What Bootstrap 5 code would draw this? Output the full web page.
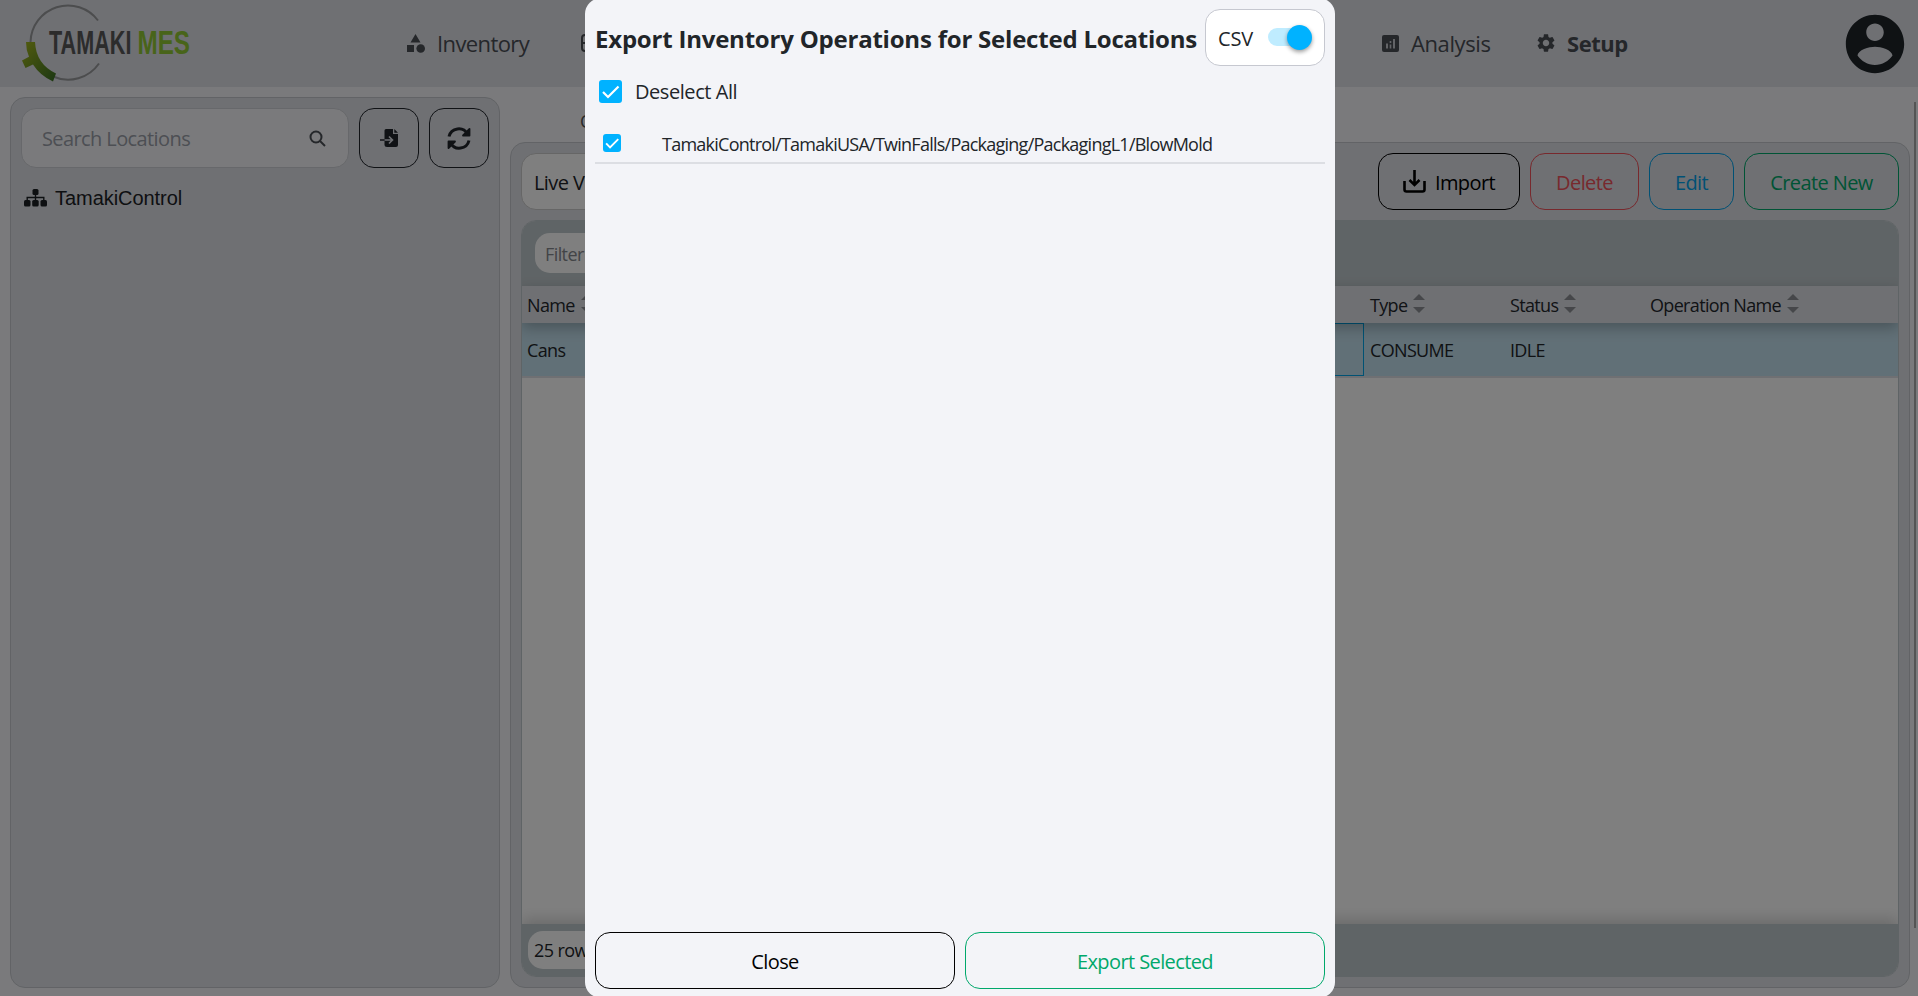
<!DOCTYPE html>
<html lang="en">
<head>
<meta charset="utf-8">
<title>Tamaki MES - Setup</title>
<link href="https://cdn.jsdelivr.net/npm/bootstrap@5.3.0/dist/css/bootstrap.min.css" rel="stylesheet">
<style>
html,body{height:100%;overflow:hidden}
body{background:#f4f5f8;font-family:"Open Sans","Noto Sans",sans-serif;font-size:20px;line-height:1.3;color:#212529;letter-spacing:-.03em}
svg{display:block;flex:none}
.topbar{height:87px;background:#dee0e7;color:#4a4e55}
.brand-col{width:407px}
.nav-entry{font-size:22px;gap:12px;padding-bottom:1px}
.w-inv{width:173px}.w-mid{width:802px}.w-ana{width:155px}
.w-ana span{letter-spacing:-.018em}
.w-set{letter-spacing:-.02em}
.body-area{height:909px;padding:10px 8px 8px 10px;gap:10px}
.pane{background:#dee0e7;border:1px solid #c4c7cc;border-radius:15px;padding:10px}
.side{width:490px}
.search-box{height:60px;width:328px;background:#f4f5f8;border:1px solid #cfd1d6;border-radius:15px;color:#9a9ea8;padding:1px 22px 0 20px}
.btn-o{background:transparent;border:1px solid currentColor;border-radius:15px;height:57px;display:flex;align-items:center;justify-content:center;font-size:20px;padding:3px 0 0;letter-spacing:-.03em}
.sq{width:60px;height:60px;color:#21252b;padding:0}
.tree-row{font-family:"Liberation Sans",Arial,sans-serif;font-size:20px;letter-spacing:-.05px;color:#1c2025;margin-top:18px;gap:8px;padding-left:3px;line-height:24px}
.tabs-line{height:45px;padding:13px 0 0 70px;font-size:18px;color:#555}
.live{background:#fff;border:1px solid #ccc;border-radius:15px;width:200px;height:57px;padding:2px 0 0 12px}
.grid-wrap{background:#fff;border-radius:15px;overflow:hidden;border:1px solid #bfc8cc;font-size:18px}
.grid-tools{background:#bfc8cc;height:65px;padding:12px 13px 13px}
.pill{background:#fff;border-radius:15px}
.g-row{display:grid;grid-template-columns:702px 140px 140px 140px 1fr;letter-spacing:-.037em}
.g-head{height:37px;background:#dee0e7;color:#23272c;box-shadow:0 5px 14px rgba(0,0,0,.25);position:relative}
.g-row>div{padding:2px 0 0 6px;display:flex;align-items:center;gap:6px}
.g-row>div:first-child{padding-left:5px}
.g-data{background:#c3e0ee;height:55px;border-bottom:2px solid #dee0e7}
.g-data .sel{border:1px solid #00a5e8}
.g-foot{height:52px;background:#bfc8cc;box-shadow:0 -4px 14px rgba(0,0,0,.18);padding:7px 6px}
.sort{display:flex;flex-direction:column;gap:7px;margin-top:-4px}
.sort:before{content:"";border:6px solid transparent;border-top:0;border-bottom:6px solid #8c8f94}
.sort:after{content:"";border:6px solid transparent;border-bottom:0;border-top:6px solid #8c8f94}
.track{width:2px;height:826px;background:#aaa;right:2px;top:102px}
.shade{background:rgba(0,0,0,.5)}
.sheet{width:750px;height:1000px;margin:-2px 0 0 585px;background:#f3f4f8;border-radius:16px;padding:11px 10px 9px}
.sheet-title{font-size:24px;font-weight:700;letter-spacing:-.009em;width:610px;padding-top:2px}
.csv{width:120px;height:57px;background:#fff;border:1px solid #c6c8d0;border-radius:15px;padding:0 12px}
.csv span{letter-spacing:-.005em;padding-top:2px}
.sw{width:44px;height:26px}
.sw-track{width:40px;height:18px;border-radius:9px;background:#bfecff;margin-top:-1px}
.knob{width:25px;height:25px;border-radius:50%;background:#00b2ff;right:0;top:0;box-shadow:0 2px 4px rgba(0,0,0,.4)}
.cb{background:#00b2ff;border-radius:3px}
.path-row{height:40px;border-bottom:2px solid #dcdee3;font-size:18px;letter-spacing:-.042em;margin-top:18px;padding:0 0 0 8px}
.c-red{color:#f0525a}.c-blue{color:#00a2ea}.c-green{color:#00a86b}
</style>
</head>
<body>
<header class="topbar d-flex align-items-center">
  <div class="brand-col">
    <svg width="200" height="87" viewBox="0 0 200 87">
      <defs><linearGradient id="gr" x1="0" y1="0" x2="1" y2="1"><stop offset="0" stop-color="#a6b81e"/><stop offset="1" stop-color="#387026"/></linearGradient></defs>
      <path d="M30.500 42A37.5 37.5 0 0 1 98 20.500M53 76.500A37.500 37.500 0 0 0 99 63.500" fill="none" stroke="#999a9c" stroke-width="2"/>
      <path d="M26 42H35Q36 64 56 73.500L53 81.500Q40 75.500 33 64.500L25.500 68 22 60.500 29 56.800Q26 50 26 42Z" fill="url(#gr)"/>
      <g font-family="Liberation Sans" font-weight="700" font-size="33" letter-spacing="0">
        <text transform="translate(49 54) scale(.655 1)" fill="#585858">TAMAKI</text>
        <text transform="translate(137.500 54) scale(.735 1)" fill="#91c934">MES</text>
      </g>
    </svg>
  </div>
  <div class="nav-entry w-inv d-flex align-items-center">
    <svg width="18" height="19" viewBox="0 0 18 19" fill="currentColor"><path d="M8.500 0 13.500 8.500H3.500ZM0 11H7V18H0Z"/><circle cx="13.700" cy="14.500" r="4.300"/></svg><span>Inventory</span>
  </div>
  <div class="nav-entry w-mid d-flex align-items-center">
    <svg width="18" height="18" viewBox="0 0 18 18" fill="none" stroke="currentColor" stroke-width="2"><rect x="2" y="1" width="15" height="16" rx="3"/><path d="M2 9H17"/></svg>
  </div>
  <div class="nav-entry w-ana d-flex align-items-center">
    <svg width="17" height="17" viewBox="0 0 17 17"><rect width="17" height="17" rx="2" fill="currentColor"/><path d="M4 8.500H6V13.500H4ZM7.700 6H9.300V8H7.700ZM7.700 9.500H9.300V13.500H7.700ZM11 4H13V13.500H11Z" fill="#c6c8cf"/></svg><span>Analysis</span>
  </div>
  <div class="nav-entry w-set d-flex align-items-center fw-bold">
    <svg width="18" height="18" viewBox="2 2 20 20" fill="currentColor"><path d="M19.140 12.940c.04-.3.060-.61.060-.94 0-.32-.02-.64-.07-.94l2.030-1.580c.18-.14.230-.41.120-.61l-1.920-3.320c-.12-.22-.37-.29-.59-.22l-2.390.96c-.5-.38-1.030-.7-1.620-.94l-.36-2.540c-.04-.24-.24-.41-.48-.41h-3.840c-.24 0-.43.170-.47.410l-.36 2.540c-.59.240-1.130.570-1.620.94l-2.390-.96c-.22-.08-.47 0-.59.220L2.740 8.870c-.12.210-.08.470.12.610l2.030 1.580c-.05.300-.09.630-.09.94s.02.640.070.940l-2.030 1.580c-.18.140-.23.410-.12.610l1.920 3.320c.12.220.37.290.59.220l2.390-.96c.5.380 1.030.700 1.620.940l.36 2.540c.05.240.24.410.480.410h3.840c.24 0 .44-.17.470-.41l.36-2.540c.59-.24 1.130-.56 1.620-.94l2.390.96c.22.080.470 0 .59-.22l1.920-3.320c.12-.22.070-.47-.12-.61l-2.010-1.580zM12 15.600c-1.980 0-3.600-1.620-3.600-3.600s1.620-3.600 3.600-3.600 3.600 1.620 3.600 3.600-1.620 3.600-3.600 3.600z"/></svg><span>Setup</span>
  </div>
  <svg class="ms-auto me-2" width="70" height="70" viewBox="0 0 24 24" fill="#1e2429"><path d="M12 2C6.480 2 2 6.480 2 12s4.480 10 10 10 10-4.480 10-10S17.520 2 12 2zm0 3c1.660 0 3 1.340 3 3s-1.340 3-3 3-3-1.340-3-3 1.340-3 3-3zm0 14.200c-2.500 0-4.710-1.280-6-3.220.03-1.990 4-3.080 6-3.080 1.990 0 5.970 1.090 6 3.080-1.290 1.940-3.500 3.220-6 3.220z"/></svg>
</header>

<main class="body-area d-flex">
  <aside class="pane side">
    <div class="d-flex justify-content-between">
      <div class="search-box d-flex align-items-center justify-content-between"><span>Search Locations</span>
        <svg width="17" height="17" viewBox="0 0 17 17" fill="none" stroke="#4a4e55" stroke-width="2"><circle cx="7" cy="7" r="5.500"/><path d="M11 11 16 16"/></svg></div>
      <button class="btn-o sq"><svg width="20" height="20" viewBox="0 0 20 20"><path d="M7 1H14V6H19V17Q19 19 17 19H8Q5.500 19 5.500 17V2.500Q5.500 1 7 1ZM15.300 1 19 4.800H15.300Z" fill="currentColor"/><path d="M5.500 12H13.500M10 8.500 13.500 12 10 15.500" fill="none" stroke="#dee0e7" stroke-width="1.600"/><path d="M1 12H5.500" stroke="currentColor" stroke-width="1.500"/></svg></button>
      <button class="btn-o sq"><svg width="24" height="23" viewBox="0 0 24 23" fill="none" stroke="currentColor" stroke-width="3" stroke-linejoin="round"><path d="M2 9.500A10 10 0 0 1 20.500 7M22 13.500A10 10 0 0 1 3.500 16" /><path d="M22.500 2V8.500H16ZM1.500 21V14.500H8Z" fill="currentColor" stroke-width="1.800"/></svg></button>
    </div>
    <div class="tree-row d-flex align-items-center">
      <svg width="23" height="18" viewBox="0 0 23 18"><g fill="currentColor"><rect x="8.500" y="0" width="6" height="6" rx="1.500"/><rect x="0" y="11" width="6.500" height="6.500" rx="1.500"/><rect x="8.200" y="11" width="6.500" height="6.500" rx="1.500"/><rect x="16.500" y="11" width="6.500" height="6.500" rx="1.500"/></g><path d="M11.500 5V12M3.200 12V8.500H19.800V12" fill="none" stroke="currentColor" stroke-width="1.400"/></svg>
      <span>TamakiControl</span>
    </div>
  </aside>
  <section class="flex-fill d-flex flex-column">
    <div class="tabs-line">O</div>
    <div class="pane flex-fill d-flex flex-column" style="gap:10px">
      <div class="d-flex" style="gap:10px">
        <div class="live d-flex align-items-center me-auto">Live View</div>
        <button class="btn-o" style="width:142px;color:#000;gap:9px"><svg width="23" height="23" viewBox="0 0 23 23" fill="none" stroke="currentColor" stroke-width="2.600" class="mb-1"><path d="M1.500 11V19.500Q1.500 21.500 3.500 21.500H19.500Q21.500 21.500 21.500 19.500V11M11.500 0V15M6.500 10 11.500 15 16.500 10"/></svg>Import</button>
        <button class="btn-o c-red" style="width:109px">Delete</button>
        <button class="btn-o c-blue" style="width:85px">Edit</button>
        <button class="btn-o c-green" style="width:155px">Create New</button>
      </div>
      <div class="grid-wrap flex-fill d-flex flex-column">
        <div class="grid-tools"><div class="pill h-100 d-flex align-items-center w-25" style="color:#85888e;padding:3px 0 0 10px">Filter</div></div>
        <div class="g-row g-head"><div>Name<span class="sort"></span></div><div></div><div>Type<span class="sort"></span></div><div>Status<span class="sort"></span></div><div>Operation Name<span class="sort"></span></div></div>
        <div class="g-row g-data"><div>Cans</div><div class="sel"></div><div>CONSUME</div><div>IDLE</div><div></div></div>
        <div class="g-foot mt-auto"><div class="pill d-flex align-items-center" style="width:110px;height:38px;padding:2px 0 0 6px">25 rows</div></div>
      </div>
    </div>
  </section>
</main>
<div class="track position-absolute"></div>

<div class="shade position-fixed top-0 start-0 w-100 h-100">
  <div class="sheet d-flex flex-column">
    <div class="d-flex align-items-center">
      <div class="sheet-title text-nowrap">Export Inventory Operations for Selected Locations</div>
      <div class="csv d-flex align-items-center justify-content-between"><span>CSV</span>
        <div class="sw position-relative d-flex align-items-center"><div class="sw-track"></div><div class="knob position-absolute"></div></div></div>
    </div>
    <div class="d-flex align-items-center" style="margin:10px 0 0 4px;height:30px;gap:13px">
      <svg class="cb" width="23" height="23" viewBox="0 0 23 23" fill="none" stroke="#fff" stroke-width="2.200"><path d="M4 12 9 17 19.500 6.500"/></svg><span style="padding-top:2px;letter-spacing:-.022em">Deselect All</span></div>
    <div class="path-row d-flex align-items-center" style="gap:41px">
      <svg class="cb" width="18" height="18" viewBox="0 0 23 23" fill="none" stroke="#fff" stroke-width="2.400"><path d="M4 12 9 17 19.500 6.500"/></svg><span class="pt-1">TamakiControl/TamakiUSA/TwinFalls/Packaging/PackagingL1/BlowMold</span></div>
    <div class="row g-0 mt-auto" style="column-gap:10px">
      <div class="col"><button class="btn-o w-100" style="color:#000">Close</button></div>
      <div class="col"><button class="btn-o w-100 c-green">Export Selected</button></div>
    </div>
  </div>
</div>
<script src="https://cdn.jsdelivr.net/npm/bootstrap@5.3.0/dist/js/bootstrap.bundle.min.js"></script>
</body>
</html>
